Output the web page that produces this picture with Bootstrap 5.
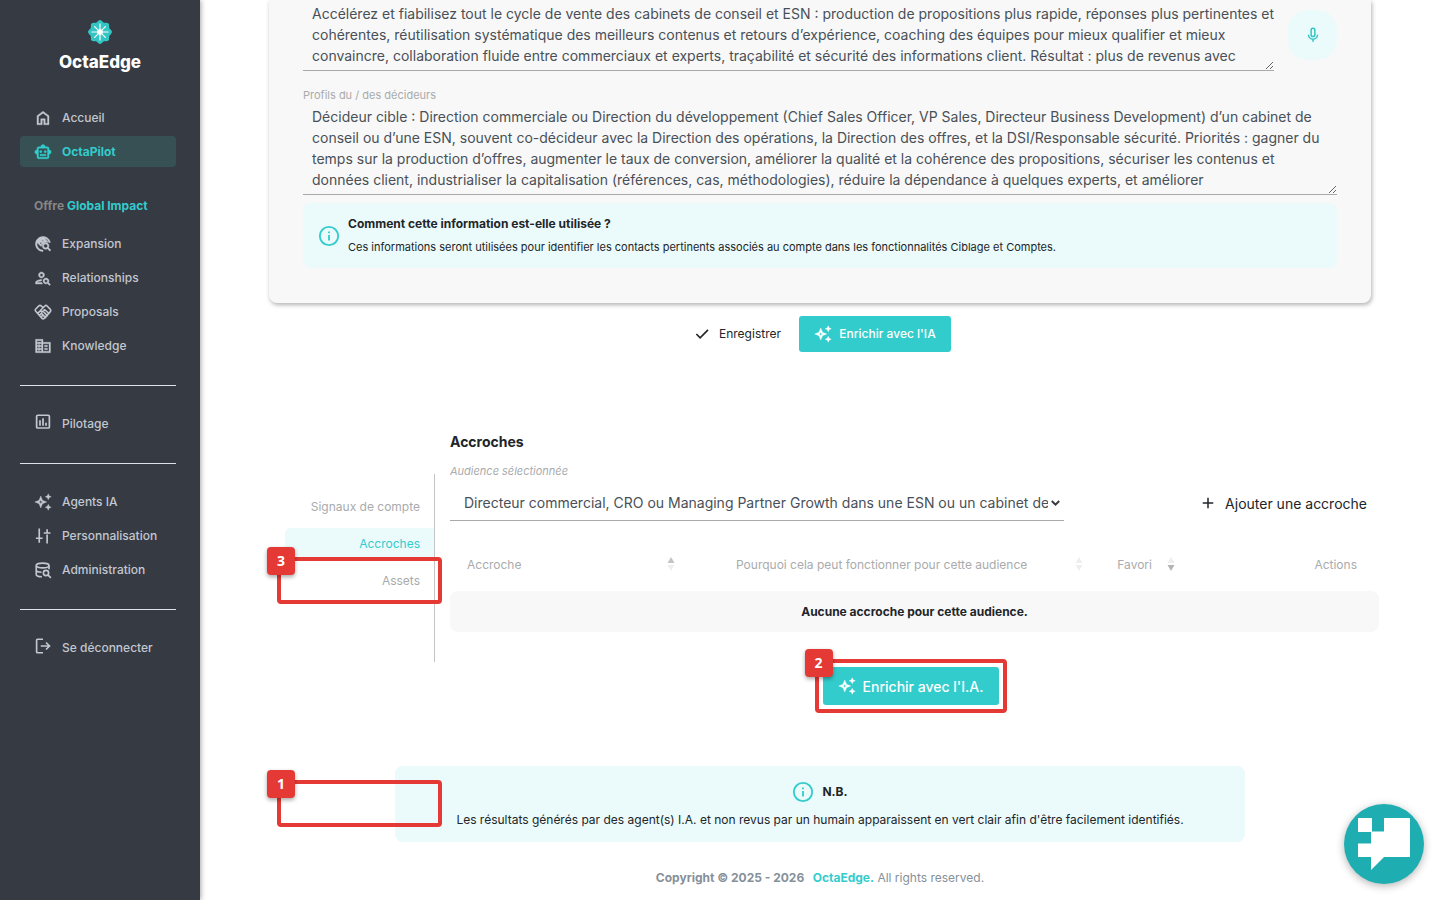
<!DOCTYPE html>
<html lang="fr">
<head>
<meta charset="utf-8">
<meta name="viewport" content="width=device-width, initial-scale=1">
<title>OctaEdge – OctaPilot</title>
<link href="https://cdn.jsdelivr.net/npm/bootstrap@5.3.0/dist/css/bootstrap.min.css" rel="stylesheet">
<style>
:root{--teal:#33cccc;--mint:#ebfafa;--ink:#212529;--grey:#a9abad;--red:#e53935}
body{font-family:Inter,"Open Sans",sans-serif;font-size:12px;color:var(--ink);background:#fff}
svg{flex:none}
.side{width:200px;padding:18px 24px 0 20px;background:#363a43;box-shadow:1px 0 5px rgba(0,0,0,.35);z-index:1}
.brand-box{padding-left:4px;margin-bottom:28px}
.brand-name{font-size:17px;line-height:24px;font-weight:800;color:#fff}
.side .nav-link{height:31px;padding:0 14px;margin-bottom:3px;gap:10px;font-weight:500;color:#c2c7d0;border-radius:4px}
.side .nav-link.active{background:#365054;color:var(--teal);font-weight:700}
.side hr{margin:21px 0 22px;border-top:1px solid #dee2e6;opacity:1}
.offer{margin:27px 14px 13px;line-height:18px;font-weight:700;color:#868686;white-space:nowrap}
.teal{color:var(--teal)}
.page-body{padding:0 69px;min-width:0}
.panel{background:#f8f8f8;border-radius:0 0 8px 8px;padding:0 34px 35px;box-shadow:1px 2px 4px rgba(0,0,0,.3)}
.area{display:block;width:100%;border:0;border-bottom:1px solid #a9a9a9;background:transparent;padding:3px 9px 0;font-size:14px;line-height:21px;color:#495057;white-space:pre;overflow:hidden;border-radius:0;outline:0;resize:both}
.area-short{height:71px}
.area-tall{height:92px}
.mic{width:49px;height:50px;margin:10px 0 0 14px;border-radius:20px;background:var(--mint);border:0}
.hint{font-size:11px;line-height:16px;color:var(--grey)}
.note{background:var(--mint);border-radius:8px}
.note-use{height:65px;padding:0 15px;gap:8px}
.note-title{font-weight:700;line-height:18px}
.note-text{font-size:11px;line-height:18px;margin-top:5px}
.btn-main{background:var(--teal);color:#fff;border:0;border-radius:3px;font-weight:500;gap:7px}
.btn-main:hover{background:#2bb9b9;color:#fff}
.btn-save{width:152px;height:36px;font-size:12px}
.btn-big{width:176px;height:38px;font-size:14px}
.btn-plain{border:0;color:var(--ink);gap:8px}
.tabs{width:150px;height:188px;margin-top:42px;padding-top:17px;border-right:1px solid #c4c4c4}
.tabs a{display:block;height:31px;line-height:31px;margin-bottom:6px;padding-right:14px;text-align:right;color:var(--grey);text-decoration:none;font-size:12px;border-radius:6px 0 0 6px}
.tabs a.active{background:var(--mint);color:var(--teal)}
.h-sec{font-size:14px;line-height:20px;font-weight:700;margin:0}
.pick{width:614px;max-width:100%;height:36px;border:0;border-bottom:1px solid #a9a9a9;padding:0 16px 0 14px;background:transparent;color:#495057;font-size:14px;appearance:none;outline:0;text-overflow:clip}
.grid-t{margin:18px 0 0;width:100%;table-layout:fixed}
.grid-t th{font-weight:400;color:var(--grey);padding:0 17px;height:52px;white-space:nowrap}
.grid-t td{background:#f8f8f8;height:41px;font-weight:700;text-align:center;border-radius:8px}
.mark-box{position:absolute;border:4px solid var(--red);border-radius:4px;pointer-events:none}
.mark-box span{position:absolute;left:-14px;top:-14px;width:28px;height:28px;border-radius:4px;background:var(--red);color:#fff;font:700 14px/28px "Open Sans",sans-serif;text-align:center;box-shadow:0 2px 4px rgba(0,0,0,.35)}
.mark-tab{left:-8px;right:-8px;top:-8px;bottom:-8px}
.mark-empty{left:-118px;width:165px;top:14px;height:47px}
.nb{width:850px;max-width:100%;height:76px;padding-top:12px;margin-top:61px}
.foot{color:#869099;line-height:18px;margin-top:27px}
.chat{position:fixed;right:16px;bottom:16px;width:80px;height:80px;border:0;border-radius:50%;background:#1eaeb1;box-shadow:0 2px 8px rgba(0,0,0,.3)}
</style>
</head>
<body>
<svg width="0" height="0" class="position-absolute" aria-hidden="true">
  <symbol id="spark" viewBox="0 0 24 24"><path fill-rule="evenodd" fill="currentColor" stroke="currentColor" stroke-width=".5" d="M9 4l2.300 5.700L17 12l-5.700 2.300L9 20l-2.300-5.700L1 12l5.700-2.300zM9 9.200l-.8 2-2 .8 2 .8.8 2 .8-2 2-.8-2-.8zM19 1l1.200 2.800L23 5l-2.800 1.200L19 9l-1.200-2.800L15 5l2.800-1.200zM19 15l1.200 2.800L23 19l-2.800 1.200L19 23l-1.200-2.800L15 19l2.800-1.200z"/></symbol>
  <symbol id="info" viewBox="0 0 24 24"><circle cx="12" cy="12" r="10" fill="none" stroke="currentColor" stroke-width="2"/><path fill="currentColor" d="M11 11h2v6h-2zM11 7h2v2h-2z"/></symbol>
</svg>
<div class="d-flex min-vh-100">
  <aside class="side flex-shrink-0">
    <div class="brand-box text-center">
      <svg class="d-block mx-auto" width="28" height="28" viewBox="0 0 26 26"><g fill="#33c4c4"><rect x="4.500" y="4.500" width="17" height="17" rx="2.500"/><rect x="4.500" y="4.500" width="17" height="17" rx="2.500" transform="rotate(45 13 13)"/></g><path stroke="#fff" stroke-width="1.100" stroke-linecap="round" d="M13 5.500v15M5.500 13h15M8 8l10 10M18 8L8 18"/><circle cx="13" cy="13" r="2.600" fill="#fff"/></svg>
      <div class="brand-name mt-1">OctaEdge</div>
    </div>
    <nav class="nav flex-column flex-nowrap" aria-label="Menu principal">
      <a class="nav-link d-flex align-items-center" href="#"><svg width="18" height="18" viewBox="0 -960 960 960" fill="currentColor" stroke="currentColor" stroke-width="20"><path d="M240-200h120v-240h240v240h120v-360L480-740 240-560v360Zm-80 80v-480l320-240 320 240v480H520v-240h-80v240H160Z"/></svg>Accueil</a>
      <a class="nav-link active d-flex align-items-center" href="#"><svg width="18" height="18" viewBox="0 -960 960 960" fill="currentColor" stroke="currentColor" stroke-width="20"><path d="M160-360q-50 0-85-35t-35-85q0-50 35-85t85-35v-80q0-33 23.500-56.500T240-760h120q0-50 35-85t85-35q50 0 85 35t35 85h120q33 0 56.500 23.500T800-680v80q50 0 85 35t35 85q0 50-35 85t-85 35v160q0 33-23.500 56.500T720-120H240q-33 0-56.500-23.500T160-200v-160Zm200-80q25 0 42.500-17.500T420-500q0-25-17.500-42.500T360-560q-25 0-42.500 17.500T300-500q0 25 17.500 42.500T360-440Zm240 0q25 0 42.500-17.500T660-500q0-25-17.500-42.500T600-560q-25 0-42.500 17.500T540-500q0 25 17.500 42.500T600-440ZM320-280h320v-80H320v80Zm-80 80h480v-480H240v480Z"/></svg>OctaPilot</a>
      <div class="offer">Offre <span class="teal">Global Impact</span></div>
      <a class="nav-link d-flex align-items-center" href="#"><svg width="18" height="18" viewBox="0 0 24 24" fill="currentColor" stroke="currentColor" stroke-width=".6"><path d="M19.300 16.900c.4-.7.7-1.500.7-2.400 0-2.500-2-4.500-4.500-4.500S11 12 11 14.500s2 4.500 4.500 4.500c.9 0 1.700-.3 2.400-.7l3.200 3.200 1.400-1.400-3.200-3.200zm-3.800.1c-1.400 0-2.500-1.100-2.500-2.500s1.100-2.500 2.500-2.500 2.500 1.100 2.500 2.500-1.100 2.500-2.500 2.500zM12 20v2C6.480 22 2 17.520 2 12S6.480 2 12 2c4.840 0 8.870 3.440 9.800 8h-2.070c-.64-2.460-2.400-4.470-4.730-5.410V5c0 1.100-.9 2-2 2h-2v2c0 .55-.45 1-1 1H8v2h2v3H9l-4.790-4.790C4.080 10.790 4 11.380 4 12c0 4.410 3.590 8 8 8z"/><path d="M14.500 4.500l4.500 5h-4.500l-4.500 3.500v-3l3-3z"/></svg>Expansion</a>
      <a class="nav-link d-flex align-items-center" href="#"><svg width="18" height="18" viewBox="0 0 24 24" fill="currentColor" fill-rule="evenodd" stroke="currentColor" stroke-width=".5"><path d="M10 12c2.210 0 4-1.790 4-4s-1.790-4-4-4-4 1.790-4 4 1.790 4 4 4zm0-6a2 2 0 1 1 0 4 2 2 0 0 1 0-4zM4 18c.22-.72 3.310-2 6-2 0-.7.13-1.370.35-1.990C7.620 13.910 2 15.270 2 18v2h9.540c-.52-.58-.93-1.250-1.190-2H4zM19.430 18.020c.36-.59.57-1.280.57-2.020 0-2.210-1.790-4-4-4s-4 1.790-4 4 1.790 4 4 4c.74 0 1.430-.22 2.020-.57L20.590 22 22 20.590l-2.570-2.570zM16 18a2 2 0 1 1 0-4 2 2 0 0 1 0 4z"/></svg>Relationships</a>
      <a class="nav-link d-flex align-items-center" href="#"><svg width="18" height="18" viewBox="0 0 24 24" fill="none" stroke="currentColor" stroke-width="2.100" stroke-linejoin="round" stroke-linecap="round"><path d="M12 6L9.500 3.800Q8 2.500 6.500 3.800L2.300 8Q1 9.500 2.300 11l8.500 9.500Q12 21.800 13.500 20.500L21.800 11.500Q23 10 21.800 8.500L17.500 4Q16 2.500 14.500 4L8.500 10Q10.500 12.500 13 10l1.500-1L20 14M10.500 14.500l5 5M13.500 12.500l4.500 4.500M5 13.500l3.500-3M7.500 16l3-3M9.500 18.500l2.500-2.500"/></svg>Proposals</a>
      <a class="nav-link d-flex align-items-center" href="#"><svg width="18" height="18" viewBox="0 -960 960 960" fill="currentColor" stroke="currentColor" stroke-width="16"><path d="M80-120v-720h400v160h400v560H80Zm80-80h240v-80H160v80Zm0-160h240v-80H160v80Zm0-160h240v-80H160v80Zm0-160h240v-80H160v80Zm320 480h320v-400H480v400Zm80-240v-80h160v80H560Zm0 160v-80h160v80H560Z"/><path d="M270-700v520" stroke-width="50"/></svg>Knowledge</a>
      <hr>
      <a class="nav-link d-flex align-items-center" href="#"><svg class="mb-1" width="18" height="18" viewBox="0 0 24 24" fill="none" stroke="currentColor" stroke-width="2.300"><rect x="3.500" y="3" width="17" height="17" rx="1.500"/><path d="M8 9.500V17M12 7v10M16 13v4"/></svg>Pilotage</a>
      <hr>
      <a class="nav-link d-flex align-items-center" href="#"><svg width="18" height="18"><use href="#spark"/></svg>Agents IA</a>
      <a class="nav-link d-flex align-items-center" href="#"><svg width="18" height="18" viewBox="0 0 24 24" fill="none" stroke="currentColor" stroke-width="2.200"><path d="M7 2v12M2.500 15h9M7 15v6M17.500 22V10M13 8h9M17.500 8V3"/></svg>Personnalisation</a>
      <a class="nav-link d-flex align-items-center" href="#"><svg width="18" height="18" viewBox="0 0 24 24" fill="none" stroke="currentColor" stroke-width="2.200"><ellipse cx="11.500" cy="6" rx="8.500" ry="3.200"/><path d="M3 6v12c0 1.800 3 3 7.500 3M20 6v5M3 12c0 1.600 3 2.800 7 3"/><circle cx="16" cy="16" r="3.500"/><path d="M18.500 18.500l4 4"/></svg>Administration</a>
      <hr>
      <a class="nav-link d-flex align-items-center" href="#"><svg class="mb-1" width="18" height="18" viewBox="0 0 24 24" fill="none" stroke="currentColor" stroke-width="2.200"><path d="M12 3H4.500Q3.500 3 3.500 4v16q0 1 1 1H12M9 12h11.500M16 7.300l4.700 4.700-4.700 4.700"/></svg>Se déconnecter</a>
    </nav>
  </aside>

  <main class="flex-grow-1 page-body">
    <section class="panel">
      <div class="d-flex">
        <div class="flex-grow-1"><textarea class="area area-short" aria-label="Proposition de valeur">Accélérez et fiabilisez tout le cycle de vente des cabinets de conseil et ESN : production de propositions plus rapide, réponses plus pertinentes et
cohérentes, réutilisation systématique des meilleurs contenus et retours d’expérience, coaching des équipes pour mieux qualifier et mieux
convaincre, collaboration fluide entre commerciaux et experts, traçabilité et sécurité des informations client. Résultat : plus de revenus avec
moins d’efforts pour les équipes.</textarea></div>
        <button class="mic d-flex align-items-center justify-content-center flex-shrink-0 p-0" type="button" aria-label="Dicter"><svg width="18" height="18" viewBox="0 0 24 24" fill="none" stroke="#33c4c4" stroke-width="2"><rect x="9.500" y="3" width="5" height="11" rx="2.500"/><path d="M6 11.500a6 6 0 0 0 12 0M12 17.500V21"/></svg></button>
      </div>
      <label class="hint d-block mt-3" for="profils">Profils du / des décideurs</label>
      <textarea class="area area-tall" id="profils">Décideur cible : Direction commerciale ou Direction du développement (Chief Sales Officer, VP Sales, Directeur Business Development) d’un cabinet de
conseil ou d’une ESN, souvent co-décideur avec la Direction des opérations, la Direction des offres, et la DSI/Responsable sécurité. Priorités : gagner du
temps sur la production d’offres, augmenter le taux de conversion, améliorer la qualité et la cohérence des propositions, sécuriser les contenus et
données client, industrialiser la capitalisation (références, cas, méthodologies), réduire la dépendance à quelques experts, et améliorer
la performance commerciale.</textarea>
      <div class="note note-use d-flex align-items-center mt-2">
        <svg class="teal" width="22" height="22"><use href="#info"/></svg>
        <div>
          <div class="note-title">Comment cette information est-elle utilisée ?</div>
          <div class="note-text">Ces informations seront utilisées pour identifier les contacts pertinents associés au compte dans les fonctionnalités Ciblage et Comptes.</div>
        </div>
      </div>
    </section>

    <div class="d-flex justify-content-center align-items-center ps-1" style="margin-top:13px;gap:18px">
      <button class="btn btn-plain d-flex align-items-center p-0" type="button" style="font-size:12px"><svg width="18" height="18" viewBox="0 0 24 24" fill="none" stroke="currentColor" stroke-width="2.200"><path d="M4.500 12l5 5L20 6.500"/></svg>Enregistrer</button>
      <button class="btn btn-main btn-save d-flex align-items-center justify-content-center p-0" type="button"><svg width="18" height="18"><use href="#spark"/></svg>Enrichir avec l'IA</button>
    </div>

    <section class="d-flex" style="margin:80px -8px 0 16px">
      <nav class="tabs flex-shrink-0" aria-label="Rubriques">
        <a href="#">Signaux de compte</a>
        <a class="active" href="#">Accroches</a>
        <a class="position-relative" href="#">Assets<span class="mark-box mark-tab"><span>3</span></span></a>
      </nav>
      <div class="flex-grow-1" style="padding-left:15px;min-width:0">
        <h2 class="h-sec">Accroches</h2>
        <label class="hint fst-italic d-block" for="aud" style="margin-top:11px">Audience sélectionnée</label>
        <div class="d-flex align-items-center justify-content-between" style="margin-top:6px">
          <div class="position-relative">
            <select class="pick" id="aud"><option>Directeur commercial, CRO ou Managing Partner Growth dans une ESN ou un cabinet de conseil</option></select>
            <svg class="position-absolute end-0 top-50 translate-middle-y me-1" width="9" height="9" viewBox="0 0 9 9" fill="none" stroke="#343a40" stroke-width="2"><path d="M.8 2.500l3.700 3.700 3.700-3.700"/></svg>
          </div>
          <button class="btn btn-plain d-flex align-items-center p-0" type="button" style="font-size:14px;margin-right:12px"><svg width="18" height="18" viewBox="0 0 24 24" stroke="currentColor" stroke-width="2"><path d="M12 5v14M5 12h14"/></svg>Ajouter une accroche</button>
        </div>
        <table class="grid-t">
          <colgroup><col style="width:26%"><col style="width:44%"><col style="width:10%"><col></colgroup>
          <thead><tr>
            <th scope="col"><div class="d-flex justify-content-between">Accroche<svg width="8" height="16" viewBox="0 0 8 16"><path fill="#c4c4c4" d="M4 1l3.500 6h-7z"/><path fill="#eee" d="M4 15l3.500-6h-7z"/></svg></div></th>
            <th scope="col"><div class="d-flex justify-content-end" style="gap:48px">Pourquoi cela peut fonctionner pour cette audience<svg width="8" height="16" viewBox="0 0 8 16" fill="#eee"><path d="M4 1l3.500 6h-7zM4 15l3.500-6h-7z"/></svg></div></th>
            <th scope="col"><div class="d-flex" style="gap:15px">Favori<svg width="8" height="16" viewBox="0 0 8 16"><path fill="#eee" d="M4 1l3.500 6h-7z"/><path fill="#b4b4b4" d="M4 15l3.500-6h-7z"/></svg></div></th>
            <th scope="col" class="text-end" style="padding-right:22px">Actions</th>
          </tr></thead>
          <tbody><tr><td colspan="4">Aucune accroche pour cette audience.</td></tr></tbody>
        </table>
        <div class="text-center pe-2" style="margin-top:35px">
          <div class="position-relative d-inline-block">
            <button class="btn btn-main btn-big d-flex align-items-center justify-content-center p-0" type="button"><svg width="18" height="18"><use href="#spark"/></svg>Enrichir avec l'I.A.</button>
            <div class="mark-box mark-tab"><span>2</span></div>
          </div>
        </div>
      </div>
    </section>

    <section class="note nb mx-auto text-center position-relative">
      <div class="mark-box mark-empty"><span>1</span></div>
      <div class="d-flex justify-content-center align-items-center" style="gap:8px;height:28px"><svg class="teal" width="22" height="22"><use href="#info"/></svg><strong>N.B.</strong></div>
      <div style="line-height:28px">Les résultats générés par des agent(s) I.A. et non revus par un humain apparaissent en vert clair afin d'être facilement identifiés.</div>
    </section>
    <footer class="foot text-center"><strong>Copyright © 2025 - 2026 &nbsp; <a class="teal text-decoration-none" href="#">OctaEdge.</a></strong> All rights reserved.</footer>
  </main>
</div>
<button class="chat p-0" type="button" aria-label="Ouvrir le chat"><svg class="d-block" width="80" height="80" viewBox="0 0 80 80" fill="#fff"><path d="M14 14h14v13.500h12V14h26v39H40L27 66V53H14V39.500h13V28H14z"/></svg></button>
<script src="https://cdn.jsdelivr.net/npm/bootstrap@5.3.0/dist/js/bootstrap.bundle.min.js"></script>
</body>
</html>
